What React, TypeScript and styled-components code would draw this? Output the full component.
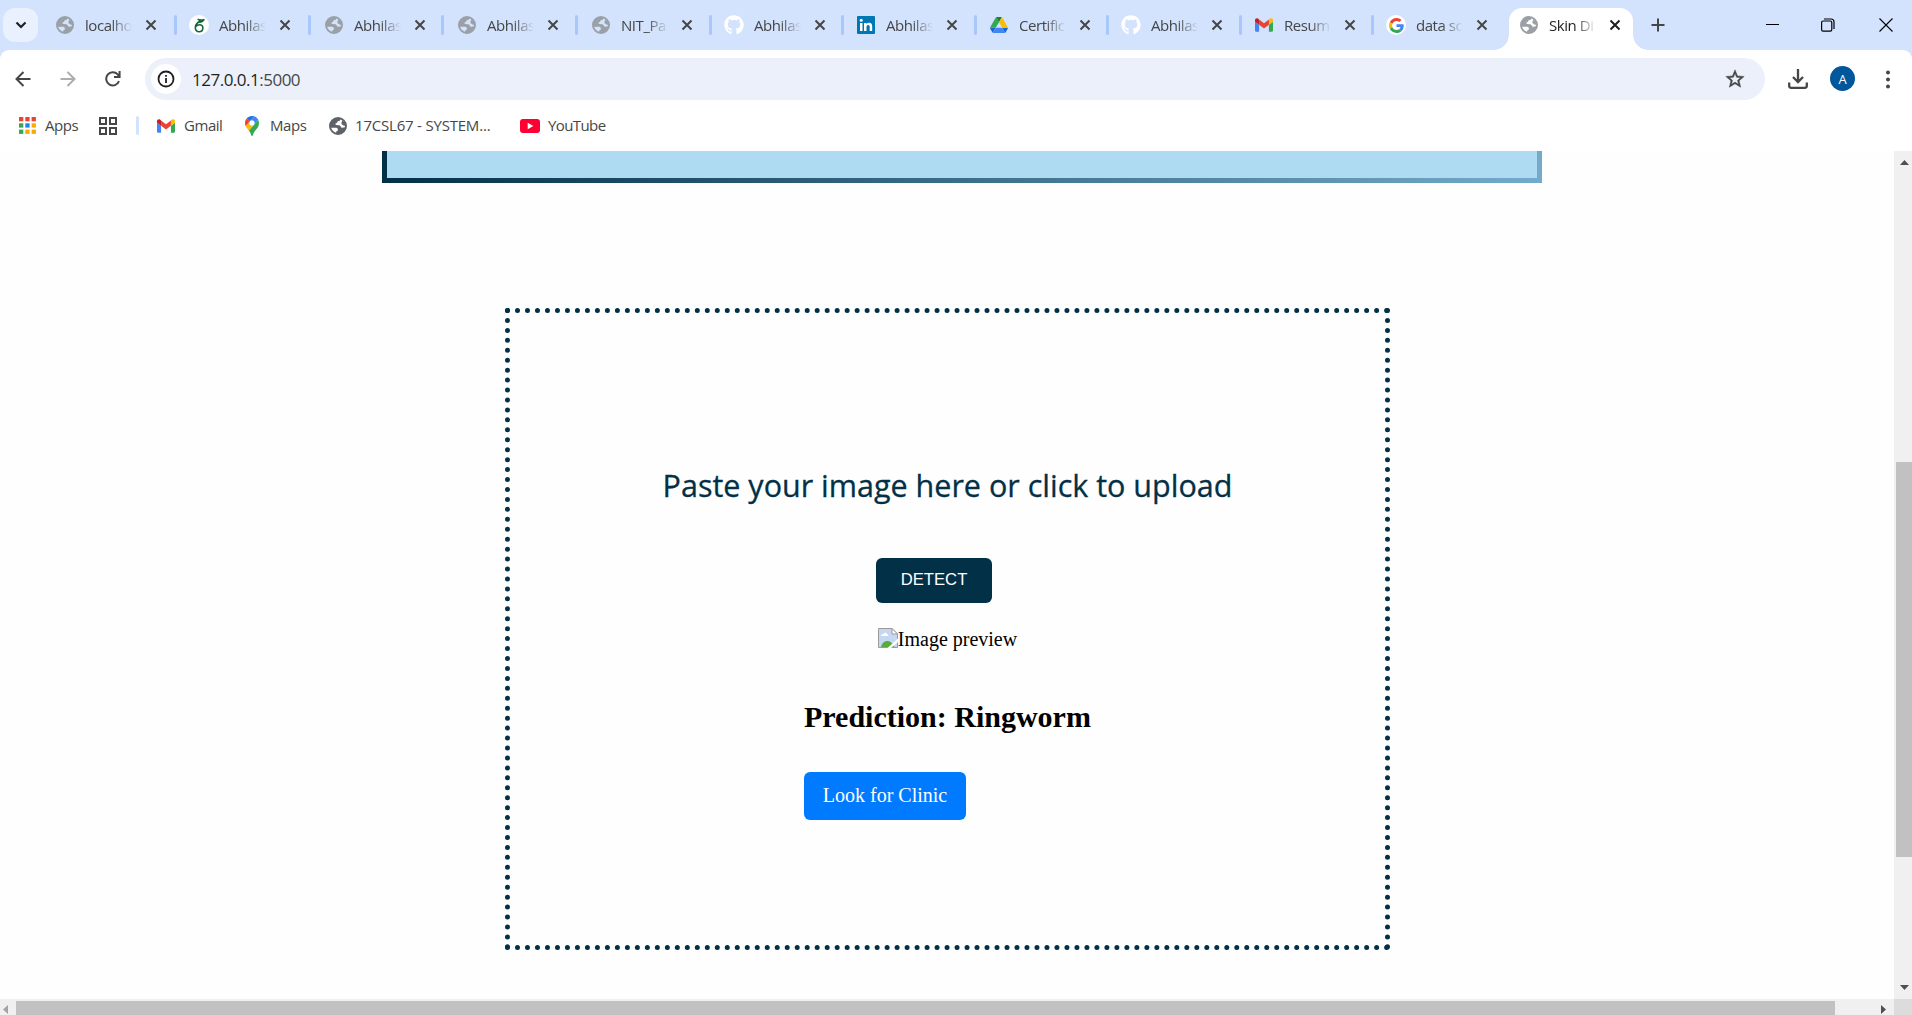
import React from "react";
import styled, { createGlobalStyle } from "styled-components";
import { FaGithub } from "react-icons/fa";

const GlobalStyle = createGlobalStyle`
  * { box-sizing: border-box; }
  html, body { margin: 0; padding: 0; background: #fff; overflow: hidden; }
`;

const UI = `"Open Sans", "Noto Sans", sans-serif`;
const SERIF = `"Liberation Serif", "Times New Roman", serif`;

const Window = styled.div`
  width: 1912px;
  height: 1015px;
  display: flex;
  flex-direction: column;
  overflow: hidden;
  background: #fff;
  font-family: ${UI};
  color: #454746;
`;

/* ---------- tab strip ---------- */

const TabStrip = styled.div`
  height: 50px;
  flex: none;
  display: flex;
  align-items: stretch;
  background: #d3e2fd;
`;

const TabSearch = styled.div`
  width: 35px;
  height: 34px;
  margin: 8px 3px 0;
  border-radius: 12px;
  background: #e9f0fe;
  display: flex;
  align-items: center;
  justify-content: center;
`;

const TabBox = styled.div<{ $w: number; $lead: number; $sep: boolean }>`
  width: ${(p) => p.$w}px;
  flex: none;
  display: flex;
  align-items: center;
  padding-left: ${(p) => p.$lead}px;
  height: 50px;
  &::after {
    content: "";
    width: 3px;
    height: 20px;
    margin-left: auto;
    border-radius: 2px;
    background: ${(p) => (p.$sep ? "#a8c7fa" : "transparent")};
  }
`;

const ActiveTab = styled.div`
  position: relative;
  width: 124px;
  height: 42px;
  margin-top: 8px;
  flex: none;
  display: flex;
  align-items: center;
  padding: 0 0 8px 10px;
  background: #fff;
  border-radius: 13px 13px 0 0;
  color: #1f1f1f;
  &::before,
  &::after {
    content: "";
    position: absolute;
    bottom: 0;
    width: 15px;
    height: 15px;
  }
  &::before {
    left: -15px;
    background: radial-gradient(circle at 0 0, transparent 14.5px, #fff 15px);
  }
  &::after {
    right: -15px;
    background: radial-gradient(circle at 100% 0, transparent 14.5px, #fff 15px);
  }
`;

const Favicon = styled.span`
  width: 20px;
  height: 20px;
  flex: none;
  display: flex;
  align-items: center;
  justify-content: center;
`;

const Disc = styled.span`
  width: 20px;
  height: 20px;
  border-radius: 50%;
  background: #fff;
  display: flex;
  align-items: center;
  justify-content: center;
`;

const TabTitle = styled.span`
  width: 47px;
  margin: 0 0 1px 10px;
  flex: none;
  white-space: nowrap;
  font-size: 15px;
  letter-spacing: -0.45px;
  line-height: 22px;
  -webkit-mask-image: linear-gradient(90deg, #000 55%, transparent 100%);
  mask-image: linear-gradient(90deg, #000 55%, transparent 100%);
`;

const CloseSlot = styled.span`
  width: 12px;
  height: 12px;
  margin-left: 12.5px;
  flex: none;
  display: flex;
`;

const NewTab = styled.div`
  width: 50px;
  display: flex;
  align-items: center;
  justify-content: center;
`;

const WindowControls = styled.div`
  margin: 0 -4px 0 auto;
  display: flex;
  align-items: center;
  height: 49px;
`;

const ControlButton = styled.span<{ $w: number }>`
  width: ${(p) => p.$w}px;
  display: flex;
  justify-content: center;
`;

/* ---------- toolbar ---------- */

const ToolbarBack = styled.div`
  background: #d3e2fd;
  flex: none;
`;

const Toolbar = styled.div`
  height: 58px;
  display: flex;
  align-items: center;
  background: #fff;
  border-radius: 9px 9px 0 0;
`;

const ToolButton = styled.span<{ $w: number }>`
  width: ${(p) => p.$w}px;
  flex: none;
  display: flex;
  align-items: center;
  justify-content: center;
`;

const Omnibox = styled.div`
  width: 1620px;
  height: 42px;
  margin-left: 10px;
  flex: none;
  border-radius: 21px;
  background: #ecf0fa;
  display: flex;
  align-items: center;
  padding: 0 19px 0 6px;
`;

const SiteInfo = styled.span`
  width: 30px;
  height: 30px;
  border-radius: 50%;
  background: #fff;
  display: flex;
  align-items: center;
  justify-content: center;
`;

const Url = styled.span`
  margin-left: 11px;
  flex: 1;
  font-size: 17px;
  letter-spacing: -0.5px;
  color: #474747;
  b {
    font-weight: 400;
    color: #1f1f1f;
  }
`;

const Avatar = styled.span`
  width: 25px;
  height: 25px;
  flex: none;
  margin-bottom: 1px;
  border-radius: 50%;
  background: #00579c;
  color: #fff;
  font-size: 13px;
  display: flex;
  align-items: center;
  justify-content: center;
`;

/* ---------- bookmarks ---------- */

const Bookmarks = styled.div`
  height: 43px;
  flex: none;
  display: flex;
  align-items: center;
  padding: 0 0 8px 19px;
`;

const Bookmark = styled.span<{ $w: number; $gap?: number }>`
  width: ${(p) => p.$w}px;
  flex: none;
  display: flex;
  align-items: center;
  gap: ${(p) => p.$gap ?? 0}px;
`;

const BookmarkLabel = styled.span<{ $track?: number }>`
  padding-bottom: 2px;
  font-size: 15px;
  letter-spacing: ${(p) => p.$track ?? -0.45}px;
  white-space: nowrap;
  line-height: 22px;
`;

const BookmarkSeparator = styled.span`
  width: 3px;
  height: 19px;
  margin-right: 18px;
  border-radius: 2px;
  background: #d3e2fd;
`;

/* ---------- page ---------- */

const Viewport = styled.div`
  flex: 1;
  min-height: 0;
  display: grid;
  grid-template-columns: 1894px 18px;
  grid-template-rows: 848px 16px;
`;

const Page = styled.main`
  overflow: hidden;
  background: #fefefe;
  font-family: ${SERIF};
  color: #000;
`;

const Banner = styled.div`
  width: 1160px;
  height: 32px;
  margin-left: 382px;
  padding: 0 5px 5px;
  background: linear-gradient(90deg, #023047, #73abca);
`;

const BannerFill = styled.div`
  height: 27px;
  background: #aedbf2;
`;

const DropZone = styled.section`
  width: 885px;
  height: 642px;
  margin: 125px 0 0 505px;
  border: 5px dotted #023047;
  display: flex;
  flex-direction: column;
  align-items: center;
`;

const Prompt = styled.p`
  margin: 150px 0 0;
  height: 44px;
  line-height: 44px;
  font-family: "Open Sans", "Noto Sans", sans-serif;
  font-size: 30.5px;
  -webkit-text-stroke: 0.3px #023047;
  color: #023047;
  white-space: nowrap;
`;

const DetectButton = styled.button`
  width: 116px;
  height: 45px;
  margin: 51px 27px 0 0;
  padding: 0 0 2px;
  border: 0;
  border-radius: 6px;
  background: #023047;
  color: #fff;
  font-family: "Liberation Sans", Arial, sans-serif;
  font-size: 16.67px;
`;

const Preview = styled.div`
  height: 22px;
  margin-top: 25px;
  display: flex;
  align-items: flex-start;
  font-size: 20px;
  line-height: 22px;
`;

const Result = styled.div`
  width: 287px;
  margin-top: 50px;
  display: flex;
  flex-direction: column;
  align-items: flex-start;
`;

const Prediction = styled.h2`
  margin: 0;
  font-size: 30px;
  line-height: 34px;
  font-weight: 700;
  white-space: nowrap;
`;

const ClinicLink = styled.a`
  width: 162px;
  height: 48px;
  margin-top: 38px;
  padding-bottom: 2px;
  border-radius: 6px;
  background: #007bff;
  color: #fff;
  font-size: 20px;
  display: flex;
  align-items: center;
  justify-content: center;
`;

const VerticalTrack = styled.div`
  background: #f0f0f0;
  display: flex;
  flex-direction: column;
  align-items: center;
  padding: 9px 0 9px 3px;
`;

const VerticalThumb = styled.div`
  width: 16px;
  height: 395px;
  margin: 297px 0 auto 0;
  align-self: flex-end;
  background: #c1c1c1;
`;

const HorizontalTrack = styled.div`
  background: #f0f0f0;
  display: flex;
  align-items: flex-start;
  padding: 2px 8px 0 3px;
`;

const HorizontalThumb = styled.div`
  width: 1819px;
  height: 14px;
  margin: 0 auto 0 8px;
  background: #c1c1c1;
`;

const ScrollCorner = styled.div`
  background: #dcdcdc;
`;

const Arrow = styled.svg<{ $top?: number }>`
  display: block;
  flex: none;
  margin-top: ${(p) => p.$top ?? 0}px;
`;

/* ---------- icons ---------- */

const Globe = ({ color = "#9aa0a6" }: { color?: string }) => (
  <svg width="18" height="18" viewBox="0 0 18 18">
    <circle cx="9" cy="9" r="8" fill="none" stroke={color} strokeWidth="2" />
    <path
      fill={color}
      d="M1 8.5C1.200 4 4.500 1 9 1l2.600.4c-.2 1.900-.9 2.400-2.300 2.600-.9.2-.9 1.400-1.600 1.900-.7.4-1.300 0-1.300 1 0 1.300 3.200 1 4.400 1.500 1.200.5.9 2.300 2.100 2.400 1.200.1 2.400-.7 3.900-.5-.5 3.800-3.700 6.700-7.400 6.700l-2.300-.4.1-2.100c1.200-.2 1.800-1.100 1.700-2.100-.1-1.300-1.200-1.700-2.600-1.700H1.200z"
    />
    <path fill={color} d="M13 3.600 15.500 5l1.300 4-2.400-.4c-.8-.7-1.900-1-2-2-.1-1.100.9-1.700.6-3z" />
  </svg>
);

const CloseIcon = ({ color = "#454746" }: { color?: string }) => (
  <svg width="12" height="12" viewBox="0 0 12 12">
    <path d="M1.500 1.500 10.500 10.500M10.500 1.500 1.500 10.500" stroke={color} strokeWidth="2" fill="none" />
  </svg>
);

const Overleaf = () => (
  <Disc>
    <svg width="13" height="15" viewBox="0 0 14 16">
      <path
        d="M11.500 2.200C7 3 2.700 5.500 2.500 10.500c0 2.600 1.600 4.200 4 4.200s4.100-1.700 4.100-4-1.500-3.500-3.700-3.500c-1.700 0-3 .8-3.800 2M5.500 1.500c1.800.8 3.500.8 6.300.2M7.500 4.600 10.500 3.500"
        fill="none"
        stroke="#13683a"
        strokeWidth="1.700"
        strokeLinecap="round"
      />
    </svg>
  </Disc>
);

const GoogleG = () => (
  <Disc>
    <svg width="15" height="15" viewBox="0 0 48 48">
      <path fill="#ea4335" d="M24 9.500c3.540 0 6.710 1.220 9.210 3.600l6.850-6.850C35.900 2.380 30.470 0 24 0 14.620 0 6.510 5.380 2.560 13.220l7.980 6.190C12.430 13.720 17.740 9.500 24 9.500z" />
      <path fill="#4285f4" d="M46.980 24.550c0-1.570-.15-3.090-.38-4.550H24v9.020h12.940c-.58 2.960-2.260 5.480-4.780 7.180l7.730 6c4.510-4.180 7.090-10.360 7.090-17.650z" />
      <path fill="#fbbc05" d="M10.530 28.590c-.48-1.450-.76-2.990-.76-4.590s.27-3.140.76-4.590l-7.980-6.190C.92 16.460 0 20.120 0 24c0 3.880.92 7.540 2.560 10.780l7.970-6.190z" />
      <path fill="#34a853" d="M24 48c6.480 0 11.930-2.130 15.890-5.810l-7.730-6c-2.150 1.450-4.920 2.300-8.160 2.300-6.260 0-11.570-4.220-13.470-9.910l-7.980 6.190C6.510 42.620 14.620 48 24 48z" />
    </svg>
  </Disc>
);

const Gmail = () => (
  <svg width="18" height="14" viewBox="52 42 88 66">
    <path fill="#4285f4" d="M58 108h14V74L52 59v43c0 3.320 2.690 6 6 6" />
    <path fill="#34a853" d="M120 108h14c3.320 0 6-2.690 6-6V59l-20 15" />
    <path fill="#fbbc04" d="M120 48v26l20-15v-8c0-7.420-8.470-11.650-14.400-7.200" />
    <path fill="#ea4335" d="M72 74V48l24 18 24-18v26L96 92" />
    <path fill="#c5221f" d="M52 51v8l20 15V48l-5.600-4.200c-5.940-4.450-14.400-.22-14.400 7.200" />
  </svg>
);

const Drive = () => (
  <svg width="18" height="16" viewBox="0 0 87.3 78">
    <path fill="#1967d2" d="m6.600 66.850 3.850 6.650c.8 1.400 1.950 2.500 3.300 3.300l13.750-23.800H0c0 1.550.4 3.100 1.200 4.500z" />
    <path fill="#34a853" d="M43.650 25 29.900 1.200c-1.350.8-2.500 1.900-3.300 3.300l-25.400 44A9 9 0 0 0 0 53h27.500z" />
    <path fill="#1967d2" d="M73.550 76.800c1.350-.8 2.500-1.900 3.300-3.300l1.600-2.750 7.650-13.250c.8-1.400 1.200-2.950 1.200-4.500H59.800l5.850 11.500z" />
    <path fill="#188038" d="M43.650 25 57.400 1.200C56.050.4 54.500 0 52.900 0H34.400c-1.600 0-3.150.45-4.500 1.200z" />
    <path fill="#4285f4" d="M59.800 53H27.500L13.750 76.800c1.350.8 2.900 1.200 4.500 1.200h50.800c1.600 0 3.150-.45 4.500-1.200z" />
    <path fill="#fbbc04" d="m73.400 26.500-12.700-22c-.8-1.400-1.950-2.500-3.300-3.300L43.650 25 59.800 53h27.450c0-1.550-.4-3.100-1.200-4.500z" />
  </svg>
);

const LinkedIn = () => (
  <svg width="18" height="18" viewBox="0 0 18 18">
    <rect width="18" height="18" rx="1" fill="#0077b5" />
    <circle cx="4.200" cy="4.300" r="1.500" fill="#fff" />
    <path fill="#fff" d="M3 7h2.500v8H3zM7 7h2.400v1.200C10 7.200 11 6.800 12 6.800c2.500 0 3.200 1.600 3.200 4V15h-2.500v-3.900c0-1.200-.2-2.100-1.500-2.100s-1.700 1-1.700 2.100V15H7z" />
  </svg>
);

const Maps = () => (
  <svg width="14" height="20" viewBox="0 0 92.3 132.3">
    <path fill="#1a73e8" d="M60.200 2.200C55.800.8 51 0 46.100 0 32 0 19.300 6.400 10.800 16.500l21.800 18.300z" />
    <path fill="#ea4335" d="M10.800 16.500C4.100 24.500 0 34.900 0 46.100c0 8.700 1.700 15.700 4.600 22l28-33.300z" />
    <path fill="#4285f4" d="M46.200 28.500c9.800 0 17.700 7.900 17.700 17.700 0 4.300-1.600 8.300-4.200 11.400 0 0 13.900-16.600 27.500-32.700-5.600-10.800-15.300-19-27-22.700L32.600 34.800c3.300-3.800 8.100-6.300 13.600-6.300" />
    <path fill="#fbbc04" d="M46.200 63.800c-9.800 0-17.700-7.900-17.700-17.700 0-4.300 1.500-8.300 4.100-11.300l-28 33.300c4.800 10.600 12.800 19.200 21 29.900l34.100-40.500c-3.300 3.900-8.100 6.300-13.500 6.300" />
    <path fill="#34a853" d="M59.100 109.200c15.400-24.100 33.300-35 33.300-63 0-7.700-1.900-14.900-5.200-21.300L25.600 98c2.600 3.400 5.300 7.300 7.900 11.300 9.400 14.500 6.800 23.100 12.800 23.100s3.400-8.700 12.800-23.200" />
  </svg>
);

const YouTube = () => (
  <svg width="20" height="14" viewBox="0 0 20 14">
    <rect width="20" height="14" rx="3" fill="#ff0033" />
    <path d="M7.700 3.800v6.400L13.300 7z" fill="#fff" />
  </svg>
);

const appColors = ["#ea4335", "#ea4335", "#ea4335", "#34a853", "#1a86f0", "#fbab00", "#34a853", "#fbab00", "#fbab00"];

const AppsGrid = () => (
  <svg width="17" height="17" viewBox="0 0 17 17">
    {appColors.map((c, i) => (
      <rect key={i} x={(i % 3) * 6.3} y={Math.floor(i / 3) * 6.3} width="4.3" height="4.3" fill={c} />
    ))}
  </svg>
);

const TabGroups = () => (
  <svg width="18" height="18" viewBox="0 0 18 18" fill="none" stroke="#454746" strokeWidth="2">
    <path d="M1 1h6v6H1zM11 1h6v6h-6zM1 11h6v6H1zM11 11h6v6h-6z" />
  </svg>
);

const BrokenImage = () => (
  <svg width="20" height="20" viewBox="0 0 20 20">
    <path d="M.5.500h13.500l5.500 5.500v13.500H.5z" fill="#c6d7f4" stroke="#9a9a9a" />
    <path d="M3 8c0-2 2-2.300 2.600-2 .8-1.800 3-1.300 3.200 0 1.600 0 2.200 2 .5 2z" fill="#fff" />
    <path d="M3 19c1.500-7.500 10-8.500 13.500 0z" fill="#58ab3c" />
    <path d="M14 .5V6h5.500z" fill="#fff" stroke="#9a9a9a" />
    <path d="M9.500 20 20 10.500V14L13 20z" fill="#fefefe" />
  </svg>
);

/* ---------- data ---------- */

const tabs: { title: string; icon: React.ReactNode; width: number; lead: number }[] = [
  { title: "localho", icon: <Globe />, width: 136, lead: 14 },
  { title: "Abhilas", icon: <Overleaf />, width: 134, lead: 12 },
  { title: "Abhilas", icon: <Globe />, width: 133, lead: 13 },
  { title: "Abhilas", icon: <Globe />, width: 134, lead: 13 },
  { title: "NIT_Pa", icon: <Globe />, width: 134, lead: 13 },
  { title: "Abhilas", icon: <FaGithub size={20} color="#fff" />, width: 132, lead: 12 },
  { title: "Abhilas", icon: <LinkedIn />, width: 133, lead: 12 },
  { title: "Certific", icon: <Drive />, width: 132, lead: 12 },
  { title: "Abhilas", icon: <FaGithub size={20} color="#fff" />, width: 133, lead: 12 },
  { title: "Resum", icon: <Gmail />, width: 132, lead: 12 },
  { title: "data sc", icon: <GoogleG />, width: 135, lead: 12 },
];

export default function App() {
  return (
    <Window>
      <GlobalStyle />
      <TabStrip>
        <TabSearch>
          <svg width="12" height="8" viewBox="0 0 12 8">
            <path d="M1.500 1.500 6 6l4.500-4.500" fill="none" stroke="#1f1f1f" strokeWidth="2.200" />
          </svg>
        </TabSearch>
        {tabs.map((tab, i) => (
          <TabBox key={i} $w={tab.width} $lead={tab.lead} $sep={i < tabs.length - 1}>
            <Favicon>{tab.icon}</Favicon>
            <TabTitle>{tab.title}</TabTitle>
            <CloseSlot>
              <CloseIcon />
            </CloseSlot>
          </TabBox>
        ))}
        <ActiveTab>
          <Favicon>
            <Globe />
          </Favicon>
          <TabTitle>Skin Di</TabTitle>
          <CloseSlot>
            <CloseIcon color="#1f1f1f" />
          </CloseSlot>
        </ActiveTab>
        <NewTab>
          <svg width="14" height="14" viewBox="0 0 14 14">
            <path d="M7 .5v13M.5 7h13" stroke="#454746" strokeWidth="2" />
          </svg>
        </NewTab>
        <WindowControls>
          <ControlButton $w={56}>
            <svg width="13" height="13" viewBox="0 0 13 13">
              <path d="M0 6.500h13" stroke="#000" />
            </svg>
          </ControlButton>
          <ControlButton $w={56}>
            <svg width="14" height="14" viewBox="0 0 14 14" fill="none" stroke="#000" strokeWidth="1.200">
              <rect x=".6" y="3" width="10.200" height="10.200" rx="1.600" />
              <path d="M3 1h7a3 3 0 0 1 3 3v7" />
            </svg>
          </ControlButton>
          <ControlButton $w={60}>
            <svg width="14" height="14" viewBox="0 0 14 14">
              <path d="M.5.500l13 13M13.500.500l-13 13" stroke="#000" strokeWidth="1.100" />
            </svg>
          </ControlButton>
        </WindowControls>
      </TabStrip>

      <ToolbarBack>
        <Toolbar>
          <ToolButton $w={45}>
            <svg width="16" height="16" viewBox="0 0 16 16" fill="none" stroke="#454746" strokeWidth="2">
              <path d="M15.500 8H2M8.500 1 1.500 8l7 7" />
            </svg>
          </ToolButton>
          <ToolButton $w={45}>
            <svg width="16" height="16" viewBox="0 0 16 16" fill="none" stroke="#adadad" strokeWidth="2">
              <path d="M.5 8H14M7.500 1l7 7-7 7" />
            </svg>
          </ToolButton>
          <ToolButton $w={45}>
            <svg width="16" height="16" viewBox="0 0 16 16" fill="none" stroke="#454746" strokeWidth="2">
              <path d="M14 10.200A6.600 6.600 0 1 1 12.700 3.400L14.500 5.500M14.600 0v6H9" />
            </svg>
          </ToolButton>
          <Omnibox>
            <SiteInfo>
              <svg width="18" height="18" viewBox="0 0 18 18">
                <circle cx="9" cy="9" r="7.500" fill="none" stroke="#1f1f1f" strokeWidth="1.800" />
                <path d="M9 8v5M9 5v1.700" stroke="#1f1f1f" strokeWidth="1.800" />
              </svg>
            </SiteInfo>
            <Url>
              <b>127.0.0.1</b>:5000
            </Url>
            <svg width="22" height="22" viewBox="0 0 24 24" fill="#454746">
              <path d="m22 9.240-7.190-.62L12 2 9.190 8.630 2 9.240l5.460 4.730L5.820 21 12 17.270 18.180 21l-1.630-7.030zM12 15.400l-3.760 2.270 1-4.280-3.320-2.880 4.380-.38L12 6.100l1.710 4.040 4.380.38-3.320 2.880 1 4.280z" stroke="#454746" strokeWidth=".5" />
            </svg>
          </Omnibox>
          <ToolButton $w={65}>
            <svg width="20" height="20" viewBox="0 0 20 20" fill="none" stroke="#454746" strokeWidth="2.300">
              <path d="M10 0v13M5 8l5 5 5-5M1.200 13.500v3.300q0 2 2 2h13.600q2 0 2-2v-3.300" />
            </svg>
          </ToolButton>
          <Avatar>A</Avatar>
          <ToolButton $w={65}>
            <svg width="4" height="19" viewBox="0 0 4 19" fill="#454746">
              <circle cx="2" cy="2.500" r="2" />
              <circle cx="2" cy="9.500" r="2" />
              <circle cx="2" cy="16.500" r="2" />
            </svg>
          </ToolButton>
        </Toolbar>
      </ToolbarBack>

      <Bookmarks>
        <Bookmark $w={80} $gap={9}>
          <AppsGrid />
          <BookmarkLabel>Apps</BookmarkLabel>
        </Bookmark>
        <Bookmark $w={37}>
          <TabGroups />
        </Bookmark>
        <BookmarkSeparator />
        <Bookmark $w={88} $gap={9}>
          <Gmail />
          <BookmarkLabel>Gmail</BookmarkLabel>
        </Bookmark>
        <Bookmark $w={84} $gap={11}>
          <Maps />
          <BookmarkLabel>Maps</BookmarkLabel>
        </Bookmark>
        <Bookmark $w={191} $gap={8}>
          <Globe color="#5f6368" />
          <BookmarkLabel $track={-0.2}>17CSL67 - SYSTEM...</BookmarkLabel>
        </Bookmark>
        <Bookmark $w={90} $gap={8}>
          <YouTube />
          <BookmarkLabel $track={-0.6}>YouTube</BookmarkLabel>
        </Bookmark>
      </Bookmarks>

      <Viewport>
        <Page>
          <Banner>
            <BannerFill />
          </Banner>
          <DropZone>
            <Prompt>Paste your image here or click to upload</Prompt>
            <DetectButton>DETECT</DetectButton>
            <Preview>
              <BrokenImage />
              Image preview
            </Preview>
            <Result>
              <Prediction>Prediction: Ringworm</Prediction>
              <ClinicLink>Look for Clinic</ClinicLink>
            </Result>
          </DropZone>
        </Page>
        <VerticalTrack>
          <Arrow width="9" height="5" viewBox="0 0 9 5">
            <path d="M0 5 4.500 0 9 5z" fill="#505050" />
          </Arrow>
          <VerticalThumb />
          <Arrow width="9" height="5" viewBox="0 0 9 5">
            <path d="M0 0 4.500 5 9 0z" fill="#505050" />
          </Arrow>
        </VerticalTrack>
        <HorizontalTrack>
          <Arrow $top={4} width="5" height="9" viewBox="0 0 5 9">
            <path d="M5 0 0 4.500 5 9z" fill="#a3a3a3" />
          </Arrow>
          <HorizontalThumb />
          <Arrow $top={4} width="5" height="9" viewBox="0 0 5 9">
            <path d="M0 0 5 4.500 0 9z" fill="#505050" />
          </Arrow>
        </HorizontalTrack>
        <ScrollCorner />
      </Viewport>
    </Window>
  );
}
